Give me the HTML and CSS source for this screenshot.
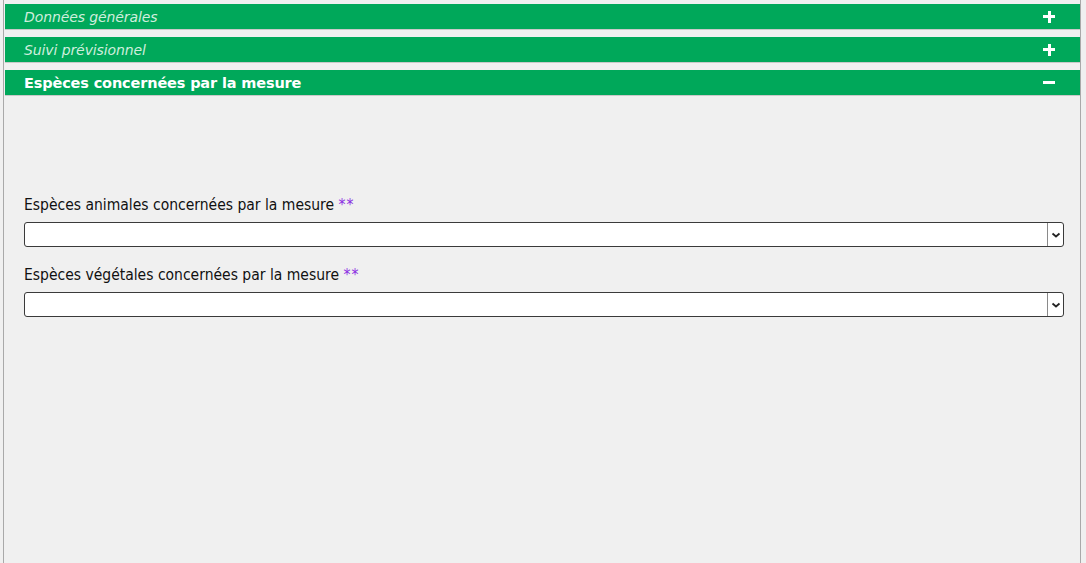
FILE: index.html
```html
<!DOCTYPE html>
<html lang="fr">
<head>
<meta charset="utf-8">
<link rel="stylesheet" href="styles.css">
</head>
<body>
<div class="panel">
  <div class="section">
    <div class="header collapsed"><span class="title">Données générales</span><span class="icon plus"></span></div>
  </div>
  <div class="section">
    <div class="header collapsed"><span class="title">Suivi prévisionnel</span><span class="icon plus"></span></div>
  </div>
  <div class="section open">
    <div class="header expanded"><span class="title">Espèces concernées par la mesure</span><span class="icon minus"></span></div>
    <div class="content">
      <div class="field">
        <label class="label">Espèces animales concernées par la mesure <span class="req">**</span></label>
        <div class="select"><span class="arrow"><svg width="10" height="6" viewBox="0 0 10 6"><path d="M1.5 1.5 L5 4.5 L8.5 1.5" fill="none" stroke="#222" stroke-width="1.8"/></svg></span></div>
      </div>
      <div class="field">
        <label class="label">Espèces végétales concernées par la mesure <span class="req">**</span></label>
        <div class="select"><span class="arrow"><svg width="10" height="6" viewBox="0 0 10 6"><path d="M1.5 1.5 L5 4.5 L8.5 1.5" fill="none" stroke="#222" stroke-width="1.8"/></svg></span></div>
      </div>
    </div>
  </div>
</div>
</body>
</html>
```
FILE: styles.css
```css
html, body {
  margin: 0;
  padding: 0;
  background: #f0f0f0;
  height: 100%;
  overflow: hidden;
}
body {
  font-family: "DejaVu Sans", sans-serif;
}
.panel {
  margin-left: 3px;
  width: 1078px;
  border-left: 1px solid #a9a9a9;
  border-right: 1px solid #a9a9a9;
  height: 563px;
  padding-top: 4px;
  box-sizing: border-box;
}
.section {
  margin: 0 0 7px 1px;
}
.header {
  height: 25px;
  background: #00a85a;
  display: flex;
  align-items: center;
  justify-content: space-between;
  padding: 0 25px 0 19px;
  border-bottom: 1px solid #c9c9c9;
  box-sizing: content-box;
}
.collapsed .title {
  font-style: italic;
  color: #cfeedd;
  font-size: 14px;
  letter-spacing: -0.1px;
}
.expanded .title {
  font-weight: bold;
  color: #ffffff;
  font-size: 14.5px;
  letter-spacing: -0.15px;
}
.icon {
  position: relative;
  width: 12px;
  height: 12px;
  display: inline-block;
}
.icon::before {
  content: "";
  position: absolute;
  left: 0;
  top: 4.5px;
  width: 12px;
  height: 3px;
  background: #fff;
}
.plus::after {
  content: "";
  position: absolute;
  left: 4.5px;
  top: 0;
  width: 3px;
  height: 12px;
  background: #fff;
}
.content {
  padding: 100px 16px 0 19px;
}
.field {
  margin-bottom: 19px;
}
.label {
  display: block;
  font-family: "DejaVu Sans Condensed", "DejaVu Sans", sans-serif;
  font-size: 15.5px;
  color: #111;
  margin-bottom: 8px;
  height: 18px;
  line-height: 18px;
}
.req {
  color: #8a2be2;
  font-weight: normal;
  letter-spacing: 1px;
}
.select {
  height: 23px;
  background: #fff;
  border: 1px solid #3a3a3a;
  border-radius: 3px;
  display: flex;
  justify-content: flex-end;
}
.arrow {
  width: 15px;
  border-left: 1px solid #8a8a8a;
  display: flex;
  align-items: center;
  justify-content: center;
}
```
